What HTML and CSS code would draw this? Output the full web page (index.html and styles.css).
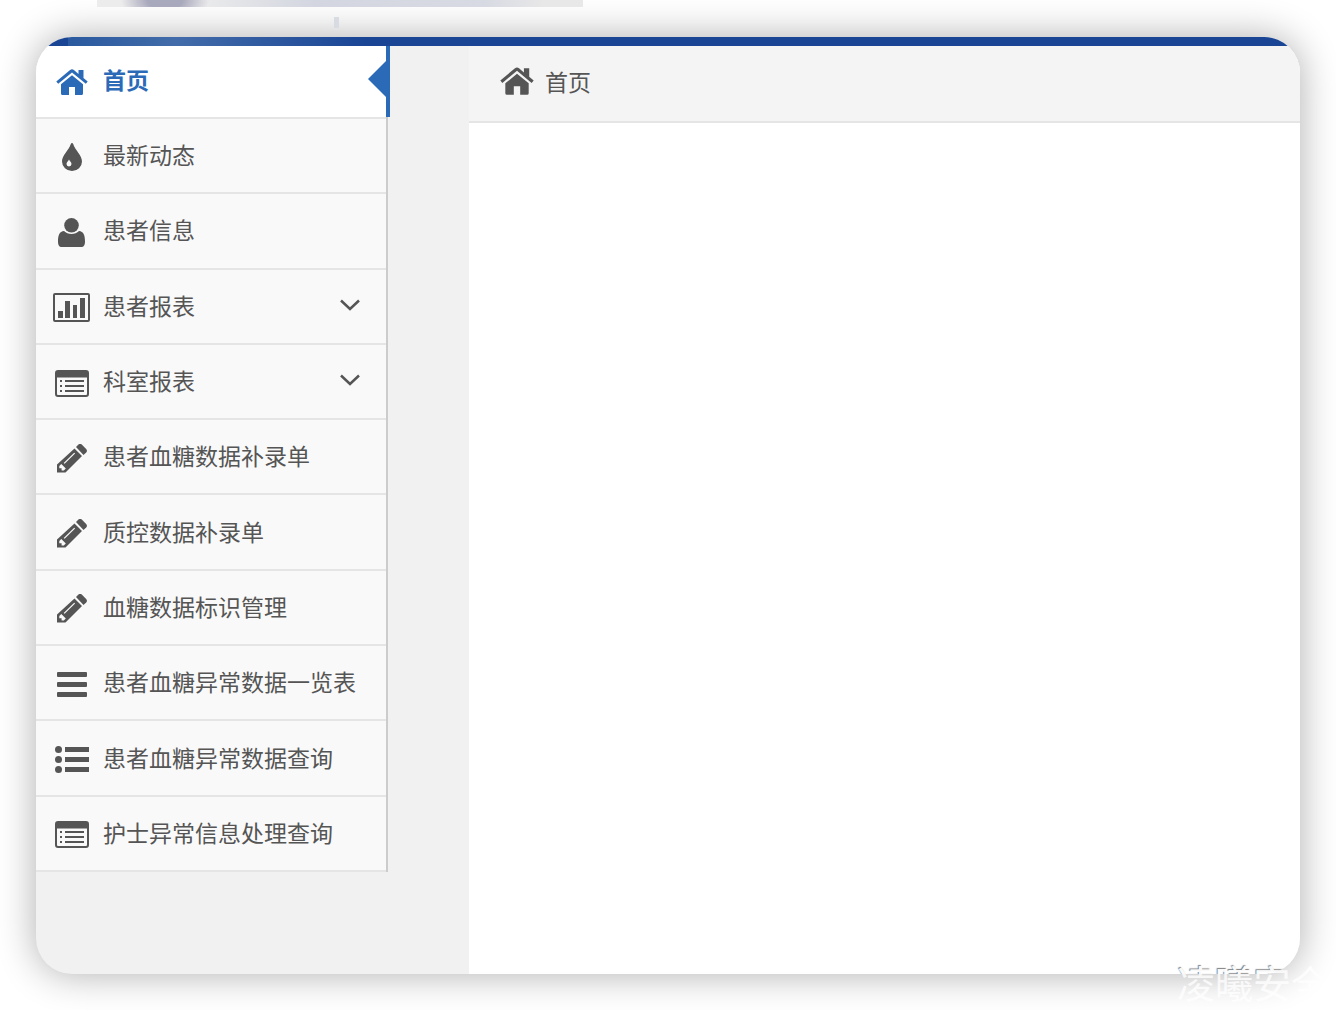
FILE: index.html
```
<!DOCTYPE html>
<html lang="zh-CN">
<head>
  <meta charset="UTF-8" />
  <meta name="viewport" content="width=device-width, initial-scale=1.0" />
  <title>首页</title>
  <link rel="stylesheet" href="styles.css">
</head>
<body>
  <!-- icons -->
  <svg class="sprite">
    <symbol id="i-home" viewBox="0 0 32 26">
      <path d="M16 6.200 27 15.200V24.500a1.500 1.500 0 0 1-1.500 1.500H19v-8h-6v8H6.500A1.500 1.500 0 0 1 5 24.500V15.200z"/>
      <path d="M31.700 12.600 27.500 9V1h-5v3.900L17.900 1a3 3 0 0 0-3.800 0L.3 12.600l1.900 2.200L16 3.400l13.800 11.400z"/>
    </symbol>
    <symbol id="i-tint" viewBox="0 0 20 28">
      <path fill-rule="evenodd" d="M10 0c.6 0 1 .3 1.200.9C13 7 20 12 20 18.500a10 9.500 0 0 1-20 0C0 12 7 7 8.800.9 9 .3 9.400 0 10 0zM7 16.500c-.8 2-2.500 2.500-2.500 4.500a2.500 2.500 0 0 0 5 0c0-2-1.700-2.500-2.500-4.500z"/>
    </symbol>
    <symbol id="i-user" viewBox="0 0 27 29">
      <circle cx="13.500" cy="7.300" r="7.300"/>
      <path d="M6 13c2 2 4.600 3 7.500 3s5.500-1 7.500-3c4.500.2 6 4.500 6 10.500 0 3.500-1 5.500-4 5.500H4c-3 0-4-2-4-5.500C0 17.500 1.500 13.200 6 13z"/>
    </symbol>
    <symbol id="i-chart" viewBox="0 0 37 29">
      <path fill-rule="evenodd" d="M2 0h33a2 2 0 0 1 2 2v25a2 2 0 0 1-2 2H2a2 2 0 0 1-2-2V2a2 2 0 0 1 2-2zm0 2v25h33V2z"/>
      <path d="M5 18h5v7H5zM12 8h5v17h-5zM20 12h4v13h-4zM27 5h5v20h-5z"/>
    </symbol>
    <symbol id="i-listalt" viewBox="0 0 34 27">
      <path fill-rule="evenodd" d="M3 0h28a3 3 0 0 1 3 3v21a3 3 0 0 1-3 3H3a3 3 0 0 1-3-3V3a3 3 0 0 1 3-3zM2 7.500V24a1 1 0 0 0 1 1h28a1 1 0 0 0 1-1V7.500z"/>
      <path d="M5 10h2v2H5zM10 10h19v2H10zM5 15h2v2H5zM10 15h19v2H10zM5 20h2v2H5zM10 20h19v2H10z"/>
    </symbol>
    <symbol id="i-pencil" viewBox="0 0 30 29">
      <path fill-rule="evenodd" d="M17.500 4.500 25 12 8.500 28.500H0V20.500zM4.300 20 2.300 22v2.200h2.300v2.300h2.200l2-2zM17.200 8.700 6.700 18.900l.9.900L18.100 9.600z"/>
      <path d="m19 3 2.200-2.200a2.700 2.700 0 0 1 3.800 0L29.200 5a2.700 2.700 0 0 1 0 3.500l-2.700 2.500z"/>
    </symbol>
    <symbol id="i-bars" viewBox="0 0 30 25">
      <rect width="30" height="5" rx="1"/><rect y="10" width="30" height="5" rx="1"/><rect y="20" width="30" height="5" rx="1"/>
    </symbol>
    <symbol id="i-list" viewBox="0 0 34 27">
      <circle cx="3.500" cy="3.500" r="3.500"/><circle cx="3.500" cy="13.500" r="3.500"/><circle cx="3.500" cy="23.500" r="3.500"/>
      <path d="M10 1h24v5H10zM10 11h24v5H10zM10 21h24v5H10z"/>
    </symbol>
    <symbol id="i-down" viewBox="0 0 20 12">
      <path d="M1 1.500l9 8.500 9-8.500" fill="none" stroke="currentColor" stroke-width="2.500"/>
    </symbol>
  </svg>

  <div class="blur-strip"></div>
  <div class="blur-mark"></div>

  <div class="container">
    <div class="navbar"></div>
    <div class="main">
      <nav class="sidebar">
        <ul class="menu">
          <li class="active"><a href="#"><span class="icon"><svg width="32" height="26"><use href="#i-home"/></svg></span>首页</a></li>
          <li><a href="#"><span class="icon"><svg width="20" height="28"><use href="#i-tint"/></svg></span>最新动态</a></li>
          <li><a href="#"><span class="icon"><svg width="27" height="29"><use href="#i-user"/></svg></span>患者信息</a></li>
          <li><a href="#"><span class="icon"><svg width="37" height="29"><use href="#i-chart"/></svg></span>患者报表<svg class="arrow" width="20" height="12"><use href="#i-down"/></svg></a></li>
          <li><a href="#"><span class="icon"><svg width="34" height="27"><use href="#i-listalt"/></svg></span>科室报表<svg class="arrow" width="20" height="12"><use href="#i-down"/></svg></a></li>
          <li><a href="#"><span class="icon"><svg width="30" height="29"><use href="#i-pencil"/></svg></span>患者血糖数据补录单</a></li>
          <li><a href="#"><span class="icon"><svg width="30" height="29"><use href="#i-pencil"/></svg></span>质控数据补录单</a></li>
          <li><a href="#"><span class="icon"><svg width="30" height="29"><use href="#i-pencil"/></svg></span>血糖数据标识管理</a></li>
          <li><a href="#"><span class="icon"><svg width="30" height="25"><use href="#i-bars"/></svg></span>患者血糖异常数据一览表</a></li>
          <li><a href="#"><span class="icon"><svg width="34" height="27"><use href="#i-list"/></svg></span>患者血糖异常数据查询</a></li>
          <li><a href="#"><span class="icon"><svg width="34" height="27"><use href="#i-listalt"/></svg></span>护士异常信息处理查询</a></li>
        </ul>
      </nav>
      <main class="content">
        <div class="breadcrumb"><svg width="34" height="28"><use href="#i-home"/></svg>首页</div>
      </main>
    </div>
  </div>

  <div class="watermark">凌曦安全</div>
</body>
</html>
```
FILE: styles.css
```
* {
  box-sizing: border-box;
}
body {
  font-family: "Liberation Sans", "Noto Sans CJK SC", sans-serif;
  font-size: 23px;
  color: #555;
  background: #fff;
  margin: 0;
  padding: 37px 36px 36px;
  height: 100vh;
  overflow: hidden;
}
svg {
  fill: currentColor;
  flex: none;
}
.sprite {
  display: none;
}
.blur-strip {
  position: absolute;
  top: 0;
  left: 97px;
  width: 486px;
  height: 7px;
  background:
    radial-gradient(ellipse 44px 24px at 68px 0, #a9a9bd 40%, transparent),
    linear-gradient(90deg, #ececec 20%, #d3d6e0 45%, #d8dae3 80%, #e8e8e8 92%);
  z-index: 1;
}
.blur-mark {
  position: absolute;
  top: 17px;
  left: 334px;
  width: 5px;
  height: 11px;
  background: #d9dbe2;
  z-index: 1;
}
.container {
  display: flex;
  flex-direction: column;
  position: relative;
  height: 100%;
  border-radius: 36px;
  overflow: hidden;
  background: #f1f1f1;
  box-shadow: 0 0 38px rgba(0, 0, 0, 0.32);
}
.navbar {
  flex: none;
  height: 9px;
  background: linear-gradient(90deg, #1a4595 32px, #2a599f 32px, #426ca9 140px, #1a4595 330px);
}
.main {
  flex: 1;
  display: flex;
}
.sidebar {
  width: 352px;
  margin-right: 81px;
}
.menu {
  display: flex;
  flex-direction: column;
  height: 89%;
  margin: 0;
  padding: 0;
  list-style: none;
  background: #f9f9f9;
  border-right: 2px solid #ccc;
}
.menu li {
  flex: 1;
  display: flex;
  border-bottom: 2px solid #e5e5e5;
}
.menu a {
  flex: 1;
  display: flex;
  align-items: center;
  padding-bottom: 3px;
  color: #555;
  text-decoration: none;
}
.icon {
  display: flex;
  justify-content: center;
  width: 71px;
  padding-top: 6px;
  margin-right: -4px;
}
.arrow {
  margin-left: auto;
  margin-right: 26px;
}
.menu .active {
  flex: none;
  height: 73px;
  position: relative;
  background: #fff;
}
.menu .active a {
  padding-bottom: 5px;
  color: #2b6ab7;
  font-weight: bold;
}
/* blue bar and pointer on the selected item */
.active::before {
  content: "";
  position: absolute;
  top: 0;
  right: -4px;
  width: 4px;
  height: 71px;
  background: #2b6ab7;
}
.active::after {
  content: "";
  position: absolute;
  top: 15px;
  right: 0;
  border: 18px solid transparent;
  border-right-color: #2b6ab7;
  border-left: 0;
}
.content {
  flex: 1;
  background: #fff;
}
.breadcrumb {
  display: flex;
  align-items: center;
  gap: 11px;
  height: 77px;
  padding: 0 31px 5px;
  background: #f4f4f4;
  border-bottom: 2px solid #e5e5e5;
}
.watermark, .container::after {
  position: absolute;
  right: 7px;
  bottom: -2px;
  font-size: 38px;
  line-height: 54px;
  white-space: nowrap;
  color: rgba(255, 255, 255, 0.8);
}
.container::after {
  content: "凌曦安全";
  right: -29px;
  bottom: -38px;
  text-shadow: -1px -1px 1px rgba(0, 0, 0, 0.5);
}
```
